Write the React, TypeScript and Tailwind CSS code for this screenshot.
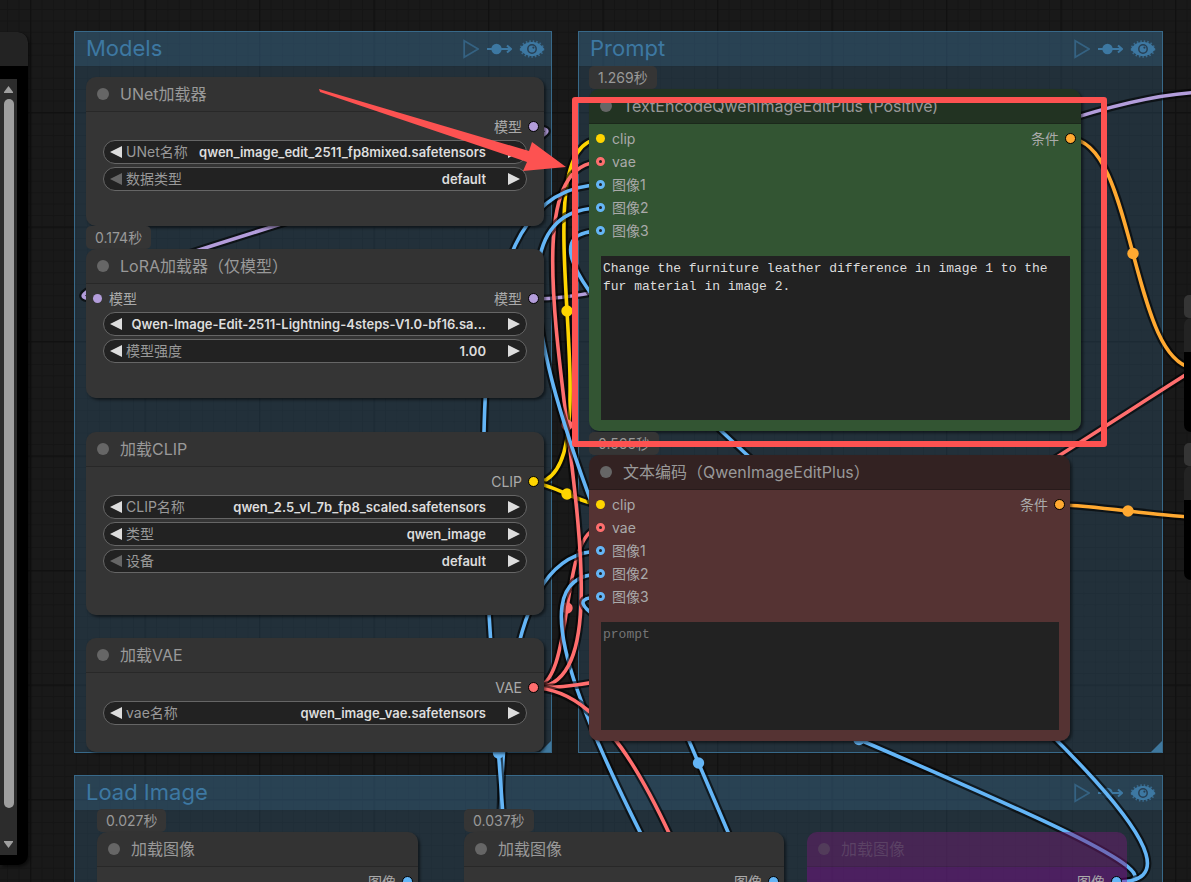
import React, { useId } from "react";

type Point = [number, number];

interface Link {
  from: Point;
  to: Point;
  color: string;
  marker?: boolean;
}

const MODEL = "#b39ddb";
const CLIP = "#ffd500";
const VAE = "#ff6e6e";
const IMAGE = "#64b5f6";
const CONDITIONING = "#ffa931";

const links: Link[] = [
  { from: [533, 128], to: [97, 299], color: MODEL },
  { from: [533, 299], to: [1210, 92], color: MODEL },
  { from: [533, 483], to: [601, 139], color: CLIP },
  { from: [533, 483], to: [601, 505], color: CLIP },
  { from: [533, 688], to: [601, 528], color: VAE },
  { from: [396, 1321], to: [601, 551], color: IMAGE },
  { from: [796, 1318], to: [601, 574], color: IMAGE },
  { from: [533, 688], to: [601, 162], color: VAE },
  { from: [533, 688], to: [1722, 136], color: VAE, marker: false },
  { from: [796, 1318], to: [601, 208], color: IMAGE },
  { from: [533, 688], to: [900, 1200], color: VAE },
  { from: [396, 1321], to: [601, 185], color: IMAGE },
  { from: [1117, 882], to: [601, 597], color: IMAGE },
  { from: [1117, 882], to: [601, 231], color: IMAGE },
  { from: [1070, 139], to: [1196, 368], color: CONDITIONING },
  { from: [1060, 505], to: [1196, 517], color: CONDITIONING },
];

function splinePath([x1, y1]: Point, [x2, y2]: Point) {
  const reach = Math.hypot(x2 - x1, y2 - y1) * 0.25;
  return `M${x1} ${y1}C${x1 + reach} ${y1} ${x2 - reach} ${y2} ${x2} ${y2}`;
}

function Grid() {
  return (
    <svg className="absolute inset-0 h-full w-full" aria-hidden="true">
      <defs>
        <pattern id="minor" width="10" height="10" patternUnits="userSpaceOnUse" patternTransform="translate(30 112) scale(1.145)">
          <path d="M0 .5H10M.5 0V10" stroke="#151515" strokeWidth="1" fill="none" />
        </pattern>
        <pattern id="major" width="100" height="100" patternUnits="userSpaceOnUse" patternTransform="translate(30 112) scale(1.145)">
          <path d="M0 .5H100M.5 0V100" stroke="#111111" strokeWidth="1.6" fill="none" />
        </pattern>
      </defs>
      <rect width="100%" height="100%" fill="url(#minor)" />
      <rect width="100%" height="100%" fill="url(#major)" />
    </svg>
  );
}

function Links() {
  return (
    <svg className="pointer-events-none absolute inset-0 h-full w-full" aria-hidden="true" fill="none">
      {links.map(({ from, to, color, marker = true }, i) => (
        <g key={i}>
          <path d={splinePath(from, to)} stroke="#000" strokeOpacity="0.6" strokeWidth="8" />
          <path d={splinePath(from, to)} stroke={color} strokeWidth="3.6" />
          {marker && <circle cx={(from[0] + to[0]) / 2} cy={(from[1] + to[1]) / 2} r="5.7" fill={color} />}
        </g>
      ))}
    </svg>
  );
}

function GroupIcons() {
  return (
    <div className="flex items-center gap-[7px] text-[#3d78a2]">
      <button type="button" aria-label="Run group">
        <svg className="block h-5 w-4 opacity-60" viewBox="0 0 16 20" fill="none" stroke="currentColor" strokeWidth="1.8">
          <path d="M1.2 1.8V18.2L15.2 10Z" />
        </svg>
      </button>
      <button type="button" aria-label="Bypass group">
        <svg className="block h-5 w-[26px]" viewBox="0 0 26 20" fill="none" stroke="currentColor" strokeWidth="2">
          <path d="M1 10H24.6M21 6.4L25 10L21 13.6" />
          <circle cx="10.5" cy="10" r="5.2" fill="currentColor" stroke="none" />
        </svg>
      </button>
      <button type="button" aria-label="Show group">
        <svg className="block h-5 w-[26px]" viewBox="0 0 26 20" fill="none">
          <ellipse cx="13" cy="10" rx="11" ry="7.4" stroke="currentColor" strokeWidth="2.6" strokeDasharray="1.5 1.9" opacity="0.75" />
          <path d="M.6 10C5 4.2 9 3 13 3S21 4.2 25.4 10C21 15.8 17 17 13 17S5 15.8.6 10Z" fill="currentColor" />
          <circle cx="13" cy="10" r="4.2" stroke="#284054" strokeWidth="1.5" />
          <circle cx="14.4" cy="8.6" r="1.1" fill="#284054" />
        </svg>
      </button>
    </div>
  );
}

function Group({ title, place, grip = true }: { title: string; place: string; grip?: boolean }) {
  return (
    <section className={`absolute border border-[#3f789e]/80 bg-[#3f789e]/25 ${place}`}>
      <header className="flex h-[34px] items-center justify-between bg-[#3f789e]/25 pr-[6px] pl-[11px]">
        <h2 className="pb-[2px] text-[22px] leading-8 text-[#3d78a2]">{title}</h2>
        <GroupIcons />
      </header>
      {grip && (
        <svg className="absolute right-0 bottom-0 h-[11px] w-[11px]" viewBox="0 0 11 11" aria-hidden="true">
          <path d="M11 0V11H0Z" fill="#3f789e" />
        </svg>
      )}
    </section>
  );
}

function Badge({ children, place }: { children: React.ReactNode; place: string }) {
  return (
    <div className={`absolute flex h-[23px] items-center rounded-[5px] bg-[#353535] px-[9px] text-sm leading-5 text-[#999] ${place}`}>
      {children}
    </div>
  );
}

interface NodeProps {
  title: string;
  place: string;
  head?: string;
  body?: string;
  children?: React.ReactNode;
}

function Node({ title, place, head = "bg-[#333333] text-[#999]", body = "bg-[#353535]", children }: NodeProps) {
  return (
    <article className={`absolute flex flex-col overflow-hidden rounded-[10px] shadow-[2px_2px_3px_rgba(0,0,0,0.5)] ${place}`}>
      <header className={`flex h-[35px] shrink-0 items-center gap-[11px] border-b border-black/20 pl-[11px] ${head}`}>
        <span className="h-3 w-3 rounded-full bg-[#666]" />
        <h3 className="text-base leading-6 whitespace-nowrap">{title}</h3>
      </header>
      <div className={`flex flex-1 flex-col pt-[3px] ${body}`}>{children}</div>
    </article>
  );
}

interface SlotProps {
  input?: string;
  output?: string;
  inputDot?: string;
  outputDot?: string;
}

function Slot({ input, output, inputDot = "", outputDot = "" }: SlotProps) {
  return (
    <div className="flex h-[23px] shrink-0 items-center pr-[5px] pl-[7px] text-sm leading-5 text-[#aaa]">
      {input && (
        <div className="flex items-center gap-[7px]">
          <span className={`h-[9px] w-[9px] rounded-full ${inputDot}`} />
          <span>{input}</span>
        </div>
      )}
      {output && (
        <div className="ml-auto flex items-center gap-[6px]">
          <span>{output}</span>
          <span className={`h-[11px] w-[11px] rounded-full border border-black ${outputDot}`} />
        </div>
      )}
    </div>
  );
}

function Arrow({ flip = false, dim = false, label }: { flip?: boolean; dim?: boolean; label: string }) {
  return (
    <button type="button" aria-label={label} disabled={dim} className="shrink-0">
      <svg className="block h-3 w-3" viewBox="0 0 12 12">
        <path d={flip ? "M0 0L12 6L0 12Z" : "M12 0L0 6L12 12Z"} fill={dim ? "#666" : "#ddd"} />
      </svg>
    </button>
  );
}

function Widget({ label, value, first = false, number = false }: { label?: string; value: string; first?: boolean; number?: boolean }) {
  const id = useId();
  return (
    <div className="flex h-6 items-center rounded-full border border-[#666] bg-[#222] px-[6px] text-sm leading-5 text-[#ddd]">
      <Arrow label="Previous" dim={first} />
      {label && (
        <label htmlFor={id} className="ml-1 shrink-0 text-[#999]">
          {label}
        </label>
      )}
      {number ? (
        <input
          id={id}
          defaultValue={value}
          className="mr-[22px] min-w-0 flex-1 bg-transparent text-right text-[13px] font-semibold outline-none"
        />
      ) : (
        <select
          id={id}
          aria-label={label ? undefined : "LoRA"}
          className="mr-[22px] min-w-0 flex-1 appearance-none bg-transparent text-[13px] font-semibold outline-none [text-align-last:right]"
        >
          <option>{value}</option>
        </select>
      )}
      <Arrow flip label="Next" />
    </div>
  );
}

function Widgets({ children }: { children: React.ReactNode }) {
  return <div className="mt-[2px] flex flex-col gap-[3px] px-[17px]">{children}</div>;
}

function PromptBox({ label, text, placeholder }: { label: string; text?: string; placeholder?: string }) {
  return (
    <textarea
      aria-label={label}
      defaultValue={text}
      placeholder={placeholder}
      spellCheck={false}
      className="mt-[14px] mr-[11px] mb-[11px] ml-[12px] block flex-1 resize-none overflow-hidden bg-[#222] px-[2px] py-1 font-['Liberation_Mono',monospace] text-[13px] leading-[18px] text-[#ddd] outline-none placeholder:text-[#757575]"
    />
  );
}

const vaeRing = "border-[3px] border-[#ff6e6e] bg-[#222]";
const imageRing = "border-[3px] border-[#64b5f6] bg-[#222]";

function EncoderSlots() {
  return (
    <>
      <Slot input="clip" inputDot="bg-[#ffd500]" output="条件" outputDot="bg-[#ffa931]" />
      <Slot input="vae" inputDot={vaeRing} />
      <Slot input="图像1" inputDot={imageRing} />
      <Slot input="图像2" inputDot={imageRing} />
      <Slot input="图像3" inputDot={imageRing} />
    </>
  );
}

function ScrolledPanel() {
  return (
    <aside className="absolute top-[32px] left-0 flex h-[833px] w-[28px] flex-col overflow-hidden rounded-r-[10px] bg-black shadow-[2px_2px_3px_rgba(0,0,0,0.5)]">
      <div className="h-[34px] shrink-0 bg-[#232323]" />
      <div className="mt-[13px] mb-[10px] flex w-[17px] flex-1 flex-col items-center gap-[6px] bg-[#2c2c2c] py-[7px]">
        <svg className="h-[7px] w-[9px]" viewBox="0 0 9 7" aria-hidden="true">
          <path d="M4.5 0L9 6V7H0V6Z" fill="#9f9f9f" />
        </svg>
        <div className="mb-[27px] w-[10px] flex-1 rounded-full bg-[#9f9f9f]" />
        <svg className="h-[7px] w-[9px]" viewBox="0 0 9 7" aria-hidden="true">
          <path d="M4.5 7L9 1V0H0V1Z" fill="#9f9f9f" />
        </svg>
      </div>
    </aside>
  );
}

function EdgeNode({ place }: { place: string }) {
  return (
    <div className={`absolute right-0 left-[1184px] flex flex-col ${place}`}>
      <div className="h-[23px] rounded-l-[5px] bg-[#353535]" />
      <div className="h-[34px] rounded-tl-[10px] bg-[#232323]" />
      <div className="h-[80px] rounded-bl-[10px] bg-black" />
    </div>
  );
}

export default function App() {
  return (
    <main className="relative h-screen w-full overflow-hidden bg-[#191919] font-['Inter','Noto_Sans_CJK_SC',sans-serif]">
      <Grid />
      <Group title="Models" place="left-[74px] top-[31px] w-[478px] h-[722px]" />
      <Group title="Prompt" place="left-[578px] top-[31px] w-[585px] h-[722px]" />
      <Group title="Load Image" place="left-[74px] top-[775px] w-[1089px] h-[500px]" grip={false} />
      <Links />

      <ScrolledPanel />
      <EdgeNode place="top-[295px]" />
      <EdgeNode place="top-[443px]" />

      <Node title="UNet加载器" place="left-[86px] top-[77px] w-[458px] h-[149px]">
        <Slot output="模型" outputDot="bg-[#b39ddb]" />
        <Widgets>
          <Widget label="UNet名称" value="qwen_image_edit_2511_fp8mixed.safetensors" />
          <Widget label="数据类型" value="default" first />
        </Widgets>
      </Node>

      <Badge place="left-[86px] top-[226px]">0.174秒</Badge>
      <Node title="LoRA加载器（仅模型）" place="left-[86px] top-[249px] w-[458px] h-[149px]">
        <Slot input="模型" inputDot="bg-[#b39ddb]" output="模型" outputDot="bg-[#b39ddb]" />
        <Widgets>
          <Widget value="Qwen-Image-Edit-2511-Lightning-4steps-V1.0-bf16.sa..." />
          <Widget label="模型强度" value="1.00" number />
        </Widgets>
      </Node>

      <Node title="加载CLIP" place="left-[86px] top-[432px] w-[458px] h-[183px]">
        <Slot output="CLIP" outputDot="bg-[#ffd500]" />
        <Widgets>
          <Widget label="CLIP名称" value="qwen_2.5_vl_7b_fp8_scaled.safetensors" />
          <Widget label="类型" value="qwen_image" />
          <Widget label="设备" value="default" first />
        </Widgets>
      </Node>

      <Node title="加载VAE" place="left-[86px] top-[638px] w-[458px] h-[114px]">
        <Slot output="VAE" outputDot="bg-[#ff6e6e]" />
        <Widgets>
          <Widget label="vae名称" value="qwen_image_vae.safetensors" />
        </Widgets>
      </Node>

      <Badge place="left-[589px] top-[66px]">1.269秒</Badge>
      <Node
        title="TextEncodeQwenImageEditPlus (Positive)"
        place="left-[589px] top-[89px] w-[492px] h-[342px]"
        head="bg-[#223322] text-[#999]"
        body="bg-[#335533]"
      >
        <EncoderSlots />
        <PromptBox
          label="Positive prompt"
          text="Change the furniture leather difference in image 1 to the fur material in image 2."
        />
      </Node>

      <Badge place="left-[589px] top-[432px]">0.565秒</Badge>
      <Node
        title="文本编码（QwenImageEditPlus）"
        place="left-[589px] top-[455px] w-[481px] h-[286px]"
        head="bg-[#332222] text-[#999]"
        body="bg-[#553333]"
      >
        <EncoderSlots />
        <PromptBox label="Negative prompt" placeholder="prompt" />
      </Node>

      <Badge place="left-[97px] top-[809px]">0.027秒</Badge>
      <Node title="加载图像" place="left-[97px] top-[832px] w-[321px] h-[300px]">
        <Slot output="图像" outputDot="bg-[#64b5f6]" />
      </Node>

      <Badge place="left-[464px] top-[809px]">0.037秒</Badge>
      <Node title="加载图像" place="left-[464px] top-[832px] w-[320px] h-[300px]">
        <Slot output="图像" outputDot="bg-[#64b5f6]" />
      </Node>

      <article className="absolute top-[832px] left-[807px] flex h-[300px] w-[320px] flex-col overflow-hidden rounded-[10px]">
        <header className="flex h-[35px] shrink-0 items-center gap-[11px] border-b border-black/10 bg-[#761b76]/45 pl-[11px]">
          <span className="h-3 w-3 rounded-full bg-[#666]/35" />
          <h3 className="text-base leading-6 text-[#999]/25">加载图像</h3>
        </header>
        <div className="flex-1 bg-[#800e90]/45 pt-[3px]">
          <Slot output="图像" outputDot="bg-[#64b5f6]" />
        </div>
      </article>

      <svg className="pointer-events-none absolute inset-0 h-full w-full" aria-hidden="true">
        <path d="M319 89L529 151L532 142L566 167L523 171L527 162L320 92Z" fill="#fd5251" />
      </svg>
      <div className="pointer-events-none absolute top-[97px] left-[572px] h-[350px] w-[535px] rounded-[3px] border-[6px] border-[#fd5251]" />
    </main>
  );
}
